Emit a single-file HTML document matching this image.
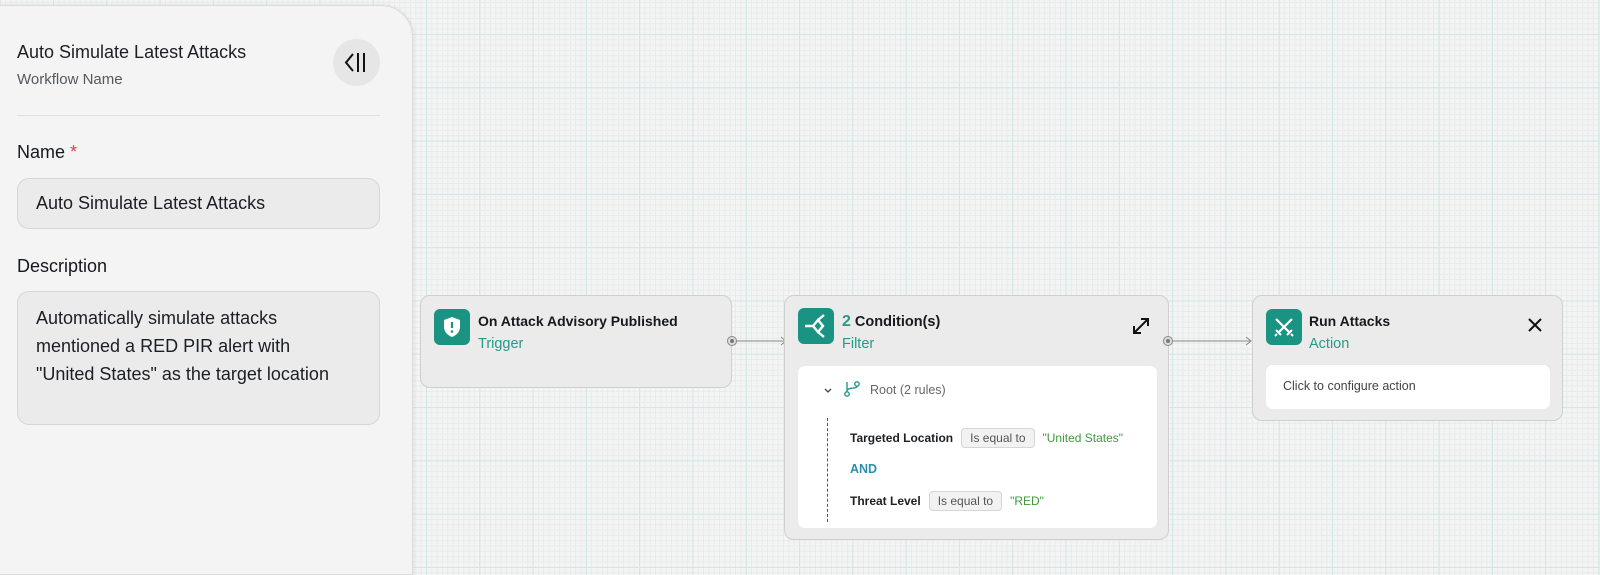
<!DOCTYPE html>
<html><head><meta charset="utf-8"><style>
*{box-sizing:border-box;margin:0;padding:0}
body{width:1600px;height:566px;overflow:hidden;font-family:"Liberation Sans",Arial,sans-serif;position:relative;
background-color:#f3f4f4;
background-image:
linear-gradient(to right,#d3e5e5 1px,transparent 1px),
linear-gradient(to bottom,#d3e5e5 1px,transparent 1px),
linear-gradient(to right,#e8ebeb 1px,transparent 1px),
linear-gradient(to bottom,#e8ebeb 1px,transparent 1px);
background-size:53.3px 53.3px,53.3px 53.3px,5.33px 5.33px,5.33px 5.33px;
background-position:426px 34px,426px 34px,426px 34px,426px 34px;}
.panel{position:absolute;left:-2px;top:5px;width:415px;height:570px;background:#f4f4f4;border:1px solid #dcdcdc;border-radius:0 32px 0 0;box-shadow:1px 0 3px rgba(0,0,0,.08)}
.abs{position:absolute}
.t1{left:17px;top:42px;font-size:18px;color:#1c1f24}
.t2{left:17px;top:71px;font-size:15px;color:#55585c}
.collapse{left:333px;top:39px;width:47px;height:47px;border-radius:50%;background:#e6e6e6}
.hr{left:17px;top:115px;width:363px;height:1px;background:#e0e0e0}
.lbl{font-size:18px;color:#15181d;left:17px}
.input{left:17px;width:363px;border:1px solid #d6d6d6;background:#ebebeb;border-radius:12px;font-size:18px;color:#1b1e24;padding:0 18px}
.node{position:absolute;background:#ebebeb;border:1px solid #cfcfcf;border-radius:10px}
.icon{position:absolute;width:36px;height:36px;border-radius:6px;background:#1a9383}
.title{position:absolute;font-size:14px;font-weight:bold;color:#16191e}
.sub{position:absolute;font-size:14.5px;color:#26998a}
.white{position:absolute;background:#fff;border-radius:7px}
.pill{display:inline-block;border:1px solid #d6d6d6;background:#f2f2f2;border-radius:4px;padding:2px 8px;font-size:12px;color:#555;margin:0 8px 0 8px;font-weight:normal}
.rule{position:absolute;font-size:12px;color:#1c1f24;font-weight:bold;white-space:nowrap}
.val{font-weight:normal;color:#3f9a3a}
</style></head><body>
<div class="panel"></div>
<div class="abs t1">Auto Simulate Latest Attacks</div>
<div class="abs t2">Workflow Name</div>
<div class="abs collapse"><svg width="47" height="47"><path d="M20 15 L13 23.5 L20 32" stroke="#111" stroke-width="2" fill="none"/><path d="M25 14v19M31 14v19" stroke="#111" stroke-width="2"/></svg></div>
<div class="abs hr"></div>
<div class="abs lbl" style="top:142px">Name <span style="color:#e0414b">*</span></div>
<div class="abs input" style="top:178px;height:51px;line-height:49px">Auto Simulate Latest Attacks</div>
<div class="abs lbl" style="top:256px">Description</div>
<div class="abs input" style="top:291px;height:134px;padding-top:12px;line-height:28px">Automatically simulate attacks<br>mentioned a RED PIR alert with<br>"United States" as the target location</div>

<div class="node" style="left:420px;top:295px;width:312px;height:93px">
<div class="icon" style="left:13px;top:13px"><svg width="36" height="36"><path d="M18 8 L26 11 V18 C26 23 22 26.5 18 28 C14 26.5 10 23 10 18 V11 Z" fill="#fff"/><path d="M18 13v6" stroke="#1a9383" stroke-width="2.2"/><circle cx="18" cy="22.5" r="1.3" fill="#1a9383"/></svg></div>
<div class="title" style="left:57px;top:17px">On Attack Advisory Published</div>
<div class="sub" style="left:57px;top:40px">Trigger</div>
</div>
<svg class="abs" style="left:724px;top:333px" width="66" height="16"><circle cx="8" cy="8" r="4.5" fill="#ddd" stroke="#888"/><circle cx="8" cy="8" r="2" fill="#777"/><path d="M12 8H62M57 4l5 4-5 4" stroke="#888" fill="none"/></svg>

<div class="node" style="left:784px;top:295px;width:385px;height:245px">
<div class="icon" style="left:13px;top:12px"><svg width="36" height="36"><path d="M7 18h8M15 18l5-6 5 6-5 6z" stroke="#fff" stroke-width="2.4" fill="none"/><path d="M20 12l6-5M20 24l6 5" stroke="#fff" stroke-width="2.4"/></svg></div>
<div class="title" style="left:57px;top:17px;font-size:14.5px"><span style="color:#26998a;font-size:16px">2</span> Condition(s)</div>
<div class="sub" style="left:57px;top:40px">Filter</div>
<svg class="abs" style="left:346px;top:20px" width="20" height="20"><path d="M3 17L17 3M10 3h7v7M3 10v7h7" stroke="#111" stroke-width="2" fill="none"/></svg>
<div class="white" style="left:13px;top:70px;width:359px;height:162px">
<svg class="abs" style="left:25px;top:20px" width="10" height="10"><path d="M2 3l3 3 3-3" stroke="#444" stroke-width="1.3" fill="none"/></svg>
<svg class="abs" style="left:45px;top:14px" width="18" height="18"><circle cx="4" cy="14" r="2.2" stroke="#26998a" fill="none" stroke-width="1.4"/><circle cx="14" cy="4" r="2.2" stroke="#26998a" fill="none" stroke-width="1.4"/><path d="M4 11.5V2M4 11c0-4 10-2 10-4.5" stroke="#26998a" fill="none" stroke-width="1.4"/></svg>
<div class="abs" style="left:72px;top:17px;font-size:12.5px;color:#666">Root (2 rules)</div>
<div class="abs" style="left:29px;top:52px;height:104px;border-left:1px dashed #555"></div>
<div class="rule" style="left:52px;top:62px">Targeted Location<span class="pill">Is equal to</span><span class="val">"United States"</span></div>
<div class="abs" style="left:52px;top:96px;font-size:12.5px;font-weight:bold;color:#2a8fb0">AND</div>
<div class="rule" style="left:52px;top:125px">Threat Level<span class="pill">Is equal to</span><span class="val">"RED"</span></div>
</div>
</div>
<svg class="abs" style="left:1160px;top:333px" width="96" height="16"><circle cx="8" cy="8" r="4.5" fill="#ddd" stroke="#888"/><circle cx="8" cy="8" r="2" fill="#777"/><path d="M12 8H91M86 4l5 4-5 4" stroke="#888" fill="none"/></svg>

<div class="node" style="left:1252px;top:295px;width:311px;height:126px">
<div class="icon" style="left:13px;top:13px"><svg width="36" height="36"><path d="M10 10l14 14M26 10L12 24" stroke="#fff" stroke-width="2.2"/><path d="M21 26l5-5M15 26l-5-5M9 27l2-2M27 27l-2-2" stroke="#fff" stroke-width="2"/></svg></div>
<div class="title" style="left:56px;top:17px">Run Attacks</div>
<div class="sub" style="left:56px;top:40px">Action</div>
<svg class="abs" style="left:275px;top:22px" width="14" height="14"><path d="M1 1L13 13M13 1L1 13" stroke="#111" stroke-width="2"/></svg>
<div class="white" style="left:13px;top:69px;width:284px;height:44px;font-size:12.5px;color:#444;padding:14px 17px">Click to configure action</div>
</div>
</body></html>
